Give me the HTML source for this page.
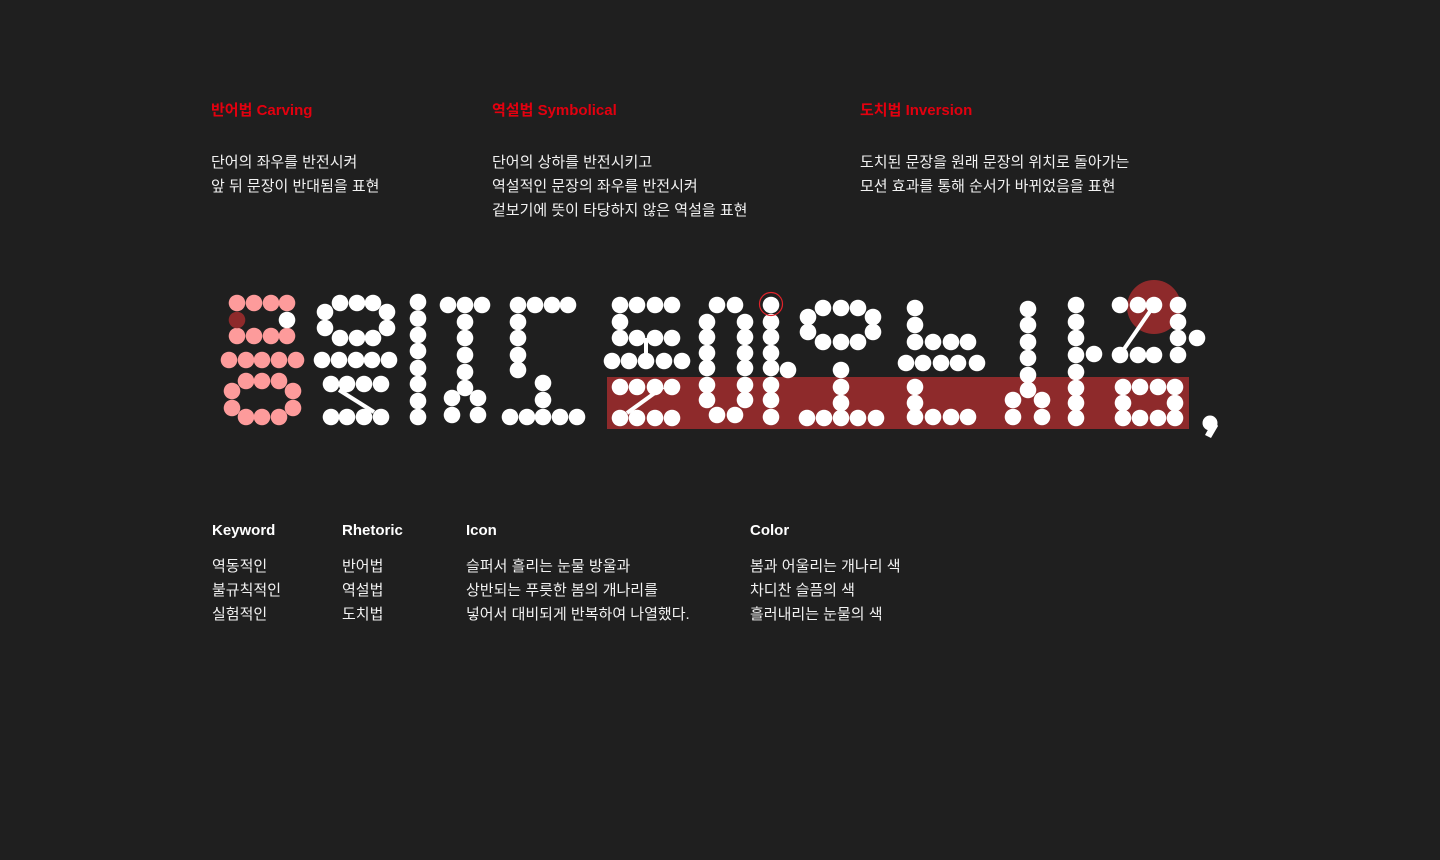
<!DOCTYPE html>
<html><head><meta charset="utf-8"><style>
html,body{margin:0;padding:0;background:#1f1f1f;width:1440px;height:860px;overflow:hidden}
body{position:relative;font-family:"Liberation Sans","Noto Sans CJK KR",sans-serif;color:#f2f2f2}
.h{position:absolute;color:#e3000f;font-weight:bold;font-size:15px;line-height:20px;top:101px}
.p{position:absolute;font-size:15px;line-height:24px;top:151px;white-space:nowrap}
.k{position:absolute;top:521px;font-weight:bold;font-size:15px;line-height:20px;color:#fff}
.q{position:absolute;top:555px;font-size:15px;line-height:24px;white-space:nowrap}
svg{position:absolute;left:0;top:0}
</style></head><body>
<div class="h" style="left:211px">반어법 Carving</div>
<div class="h" style="left:492px">역설법 Symbolical</div>
<div class="h" style="left:860px">도치법 Inversion</div>
<div class="p" style="left:211px">단어의 좌우를 반전시켜<br>앞 뒤 문장이 반대됨을 표현</div>
<div class="p" style="left:492px">단어의 상하를 반전시키고<br>역설적인 문장의 좌우를 반전시켜<br>겉보기에 뜻이 타당하지 않은 역설을 표현</div>
<div class="p" style="left:860px">도치된 문장을 원래 문장의 위치로 돌아가는<br>모션 효과를 통해 순서가 바뀌었음을 표현</div>
<div class="k" style="left:212px">Keyword</div>
<div class="k" style="left:342px">Rhetoric</div>
<div class="k" style="left:466px">Icon</div>
<div class="k" style="left:750px">Color</div>
<div class="q" style="left:212px">역동적인<br>불규칙적인<br>실험적인</div>
<div class="q" style="left:342px">반어법<br>역설법<br>도치법</div>
<div class="q" style="left:466px">슬퍼서 흘리는 눈물 방울과<br>상반되는 푸릇한 봄의 개나리를<br>넣어서 대비되게 반복하여 나열했다.</div>
<div class="q" style="left:750px">봄과 어울리는 개나리 색<br>차디찬 슬픔의 색<br>흘러내리는 눈물의 색</div>
<svg width="1440" height="860" viewBox="0 0 1440 860">
<rect x="607" y="377" width="582" height="52" fill="#8e2a2b"/>
<circle cx="1154" cy="307" r="27" fill="#8e2a2b"/>
<g fill="#fd9b9b">
<circle cx="237" cy="303" r="8.3"/><circle cx="254" cy="303" r="8.3"/><circle cx="271" cy="303" r="8.3"/><circle cx="287" cy="303" r="8.3"/>
<circle cx="237" cy="336" r="8.3"/><circle cx="254" cy="336" r="8.3"/><circle cx="271" cy="336" r="8.3"/><circle cx="287" cy="336" r="8.3"/>
<circle cx="229" cy="360" r="8.3"/><circle cx="246" cy="360" r="8.3"/><circle cx="262" cy="360" r="8.3"/><circle cx="279" cy="360" r="8.3"/><circle cx="296" cy="360" r="8.3"/>
<circle cx="246" cy="381" r="8.3"/><circle cx="262" cy="381" r="8.3"/><circle cx="279" cy="381" r="8.3"/>
<circle cx="232" cy="391" r="8.3"/><circle cx="293" cy="391" r="8.3"/><circle cx="232" cy="408" r="8.3"/><circle cx="293" cy="408" r="8.3"/>
<circle cx="246" cy="417" r="8.3"/><circle cx="262" cy="417" r="8.3"/><circle cx="279" cy="417" r="8.3"/>
</g>
<circle cx="237" cy="320" r="8.3" fill="#8e2a2b"/>
<g stroke="#fff" stroke-width="4"><line x1="339" y1="390" x2="374" y2="412"/><line x1="663" y1="387" x2="627" y2="413"/><line x1="1153" y1="307" x2="1122" y2="352"/><line x1="646" y1="338" x2="646" y2="361"/></g>
<g fill="#fff">
<circle cx="287" cy="320" r="8.3"/>
<circle cx="340" cy="303" r="8.3"/><circle cx="357" cy="303" r="8.3"/><circle cx="373" cy="303" r="8.3"/>
<circle cx="325" cy="312" r="8.3"/><circle cx="387" cy="312" r="8.3"/><circle cx="325" cy="328" r="8.3"/><circle cx="387" cy="328" r="8.3"/>
<circle cx="340" cy="338" r="8.3"/><circle cx="357" cy="338" r="8.3"/><circle cx="373" cy="338" r="8.3"/>
<circle cx="322" cy="360" r="8.3"/><circle cx="339" cy="360" r="8.3"/><circle cx="356" cy="360" r="8.3"/><circle cx="372" cy="360" r="8.3"/><circle cx="389" cy="360" r="8.3"/>
<circle cx="331" cy="384" r="8.3"/><circle cx="347" cy="384" r="8.3"/><circle cx="364" cy="384" r="8.3"/><circle cx="381" cy="384" r="8.3"/>
<circle cx="331" cy="417" r="8.3"/><circle cx="347" cy="417" r="8.3"/><circle cx="364" cy="417" r="8.3"/><circle cx="381" cy="417" r="8.3"/>
<circle cx="418" cy="302" r="8.3"/><circle cx="418" cy="318.5" r="8.3"/><circle cx="418" cy="335" r="8.3"/><circle cx="418" cy="351" r="8.3"/><circle cx="418" cy="368" r="8.3"/><circle cx="418" cy="384" r="8.3"/><circle cx="418" cy="401" r="8.3"/><circle cx="418" cy="417" r="8.3"/>
<circle cx="448" cy="305" r="8.3"/><circle cx="465" cy="305" r="8.3"/><circle cx="482" cy="305" r="8.3"/>
<circle cx="465" cy="322" r="8.3"/><circle cx="465" cy="338" r="8.3"/><circle cx="465" cy="355" r="8.3"/><circle cx="465" cy="372" r="8.3"/><circle cx="465" cy="388" r="8.3"/>
<circle cx="452" cy="398" r="8.3"/><circle cx="478" cy="398" r="8.3"/><circle cx="452" cy="415" r="8.3"/><circle cx="478" cy="415" r="8.3"/>
<circle cx="518" cy="305" r="8.3"/><circle cx="535" cy="305" r="8.3"/><circle cx="552" cy="305" r="8.3"/><circle cx="568" cy="305" r="8.3"/>
<circle cx="518" cy="322" r="8.3"/><circle cx="518" cy="338" r="8.3"/><circle cx="518" cy="355" r="8.3"/><circle cx="518" cy="370" r="8.3"/>
<circle cx="543" cy="383" r="8.3"/><circle cx="543" cy="400" r="8.3"/>
<circle cx="510" cy="417" r="8.3"/><circle cx="527" cy="417" r="8.3"/><circle cx="543" cy="417" r="8.3"/><circle cx="560" cy="417" r="8.3"/><circle cx="577" cy="417" r="8.3"/>
<circle cx="620" cy="305" r="8.3"/><circle cx="637" cy="305" r="8.3"/><circle cx="655" cy="305" r="8.3"/><circle cx="672" cy="305" r="8.3"/>
<circle cx="620" cy="322" r="8.3"/>
<circle cx="620" cy="338" r="8.3"/><circle cx="637" cy="338" r="8.3"/><circle cx="655" cy="338" r="8.3"/><circle cx="672" cy="338" r="8.3"/>
<circle cx="612" cy="361" r="8.3"/><circle cx="629" cy="361" r="8.3"/><circle cx="646" cy="361" r="8.3"/><circle cx="664" cy="361" r="8.3"/><circle cx="682" cy="361" r="8.3"/>
<circle cx="620" cy="387" r="8.3"/><circle cx="637" cy="387" r="8.3"/><circle cx="655" cy="387" r="8.3"/><circle cx="672" cy="387" r="8.3"/>
<circle cx="620" cy="418" r="8.3"/><circle cx="637" cy="418" r="8.3"/><circle cx="655" cy="418" r="8.3"/><circle cx="672" cy="418" r="8.3"/>
<circle cx="717" cy="305" r="8.3"/><circle cx="735" cy="305" r="8.3"/>
<circle cx="707" cy="322" r="8.3"/><circle cx="707" cy="337" r="8.3"/><circle cx="707" cy="353" r="8.3"/><circle cx="707" cy="368" r="8.3"/><circle cx="707" cy="385" r="8.3"/><circle cx="707" cy="400" r="8.3"/>
<circle cx="745" cy="322" r="8.3"/><circle cx="745" cy="337" r="8.3"/><circle cx="745" cy="353" r="8.3"/><circle cx="745" cy="368" r="8.3"/><circle cx="745" cy="385" r="8.3"/><circle cx="745" cy="400" r="8.3"/>
<circle cx="717" cy="415" r="8.3"/><circle cx="735" cy="415" r="8.3"/>
<circle cx="771" cy="305" r="8.3"/><circle cx="771" cy="322" r="8.3"/><circle cx="771" cy="337" r="8.3"/><circle cx="771" cy="353" r="8.3"/><circle cx="771" cy="368" r="8.3"/><circle cx="771" cy="385" r="8.3"/><circle cx="771" cy="400" r="8.3"/><circle cx="771" cy="417" r="8.3"/>
<circle cx="788" cy="370" r="8.3"/>
<circle cx="823" cy="308" r="8.3"/><circle cx="841" cy="308" r="8.3"/><circle cx="858" cy="308" r="8.3"/>
<circle cx="808" cy="317" r="8.3"/><circle cx="873" cy="317" r="8.3"/><circle cx="808" cy="332" r="8.3"/><circle cx="873" cy="332" r="8.3"/>
<circle cx="823" cy="342" r="8.3"/><circle cx="841" cy="342" r="8.3"/><circle cx="858" cy="342" r="8.3"/>
<circle cx="841" cy="370" r="8.3"/><circle cx="841" cy="387" r="8.3"/><circle cx="841" cy="403" r="8.3"/>
<circle cx="807" cy="418" r="8.3"/><circle cx="824" cy="418" r="8.3"/><circle cx="841" cy="418" r="8.3"/><circle cx="858" cy="418" r="8.3"/><circle cx="876" cy="418" r="8.3"/>
<circle cx="915" cy="308" r="8.3"/><circle cx="915" cy="325" r="8.3"/>
<circle cx="915" cy="342" r="8.3"/><circle cx="933" cy="342" r="8.3"/><circle cx="951" cy="342" r="8.3"/><circle cx="968" cy="342" r="8.3"/>
<circle cx="906" cy="363" r="8.3"/><circle cx="923" cy="363" r="8.3"/><circle cx="941" cy="363" r="8.3"/><circle cx="958" cy="363" r="8.3"/><circle cx="977" cy="363" r="8.3"/>
<circle cx="915" cy="387" r="8.3"/><circle cx="915" cy="403" r="8.3"/>
<circle cx="915" cy="417" r="8.3"/><circle cx="933" cy="417" r="8.3"/><circle cx="951" cy="417" r="8.3"/><circle cx="968" cy="417" r="8.3"/>
<circle cx="1028" cy="309" r="8.3"/><circle cx="1028" cy="325" r="8.3"/><circle cx="1028" cy="342" r="8.3"/><circle cx="1028" cy="358" r="8.3"/><circle cx="1028" cy="375" r="8.3"/><circle cx="1028" cy="390" r="8.3"/>
<circle cx="1013" cy="400" r="8.3"/><circle cx="1042" cy="400" r="8.3"/><circle cx="1013" cy="417" r="8.3"/><circle cx="1042" cy="417" r="8.3"/>
<circle cx="1076" cy="305" r="8.3"/><circle cx="1076" cy="322" r="8.3"/><circle cx="1076" cy="338" r="8.3"/><circle cx="1076" cy="355" r="8.3"/><circle cx="1076" cy="372" r="8.3"/><circle cx="1076" cy="388" r="8.3"/><circle cx="1076" cy="403" r="8.3"/><circle cx="1076" cy="418" r="8.3"/>
<circle cx="1094" cy="354" r="8.3"/>
<circle cx="1120" cy="305" r="8.3"/><circle cx="1138" cy="305" r="8.3"/><circle cx="1154" cy="305" r="8.3"/>
<circle cx="1178" cy="305" r="8.3"/><circle cx="1178" cy="322" r="8.3"/><circle cx="1178" cy="338" r="8.3"/><circle cx="1178" cy="355" r="8.3"/><circle cx="1197" cy="338" r="8.3"/>
<circle cx="1120" cy="355" r="8.3"/><circle cx="1138" cy="355" r="8.3"/><circle cx="1154" cy="355" r="8.3"/>
<circle cx="1123" cy="387" r="8.3"/><circle cx="1140" cy="387" r="8.3"/><circle cx="1158" cy="387" r="8.3"/><circle cx="1175" cy="387" r="8.3"/>
<circle cx="1123" cy="403" r="8.3"/><circle cx="1175" cy="403" r="8.3"/>
<circle cx="1123" cy="418" r="8.3"/><circle cx="1140" cy="418" r="8.3"/><circle cx="1158" cy="418" r="8.3"/><circle cx="1175" cy="418" r="8.3"/>
<circle cx="1210" cy="423" r="7.5"/><path d="M1213 418 L1218 426 L1211 438 L1205 435 L1210 426 Z"/>
</g>
<circle cx="771" cy="304" r="11.5" fill="none" stroke="#e3222a" stroke-width="1.2"/>
</svg>
</body></html>
